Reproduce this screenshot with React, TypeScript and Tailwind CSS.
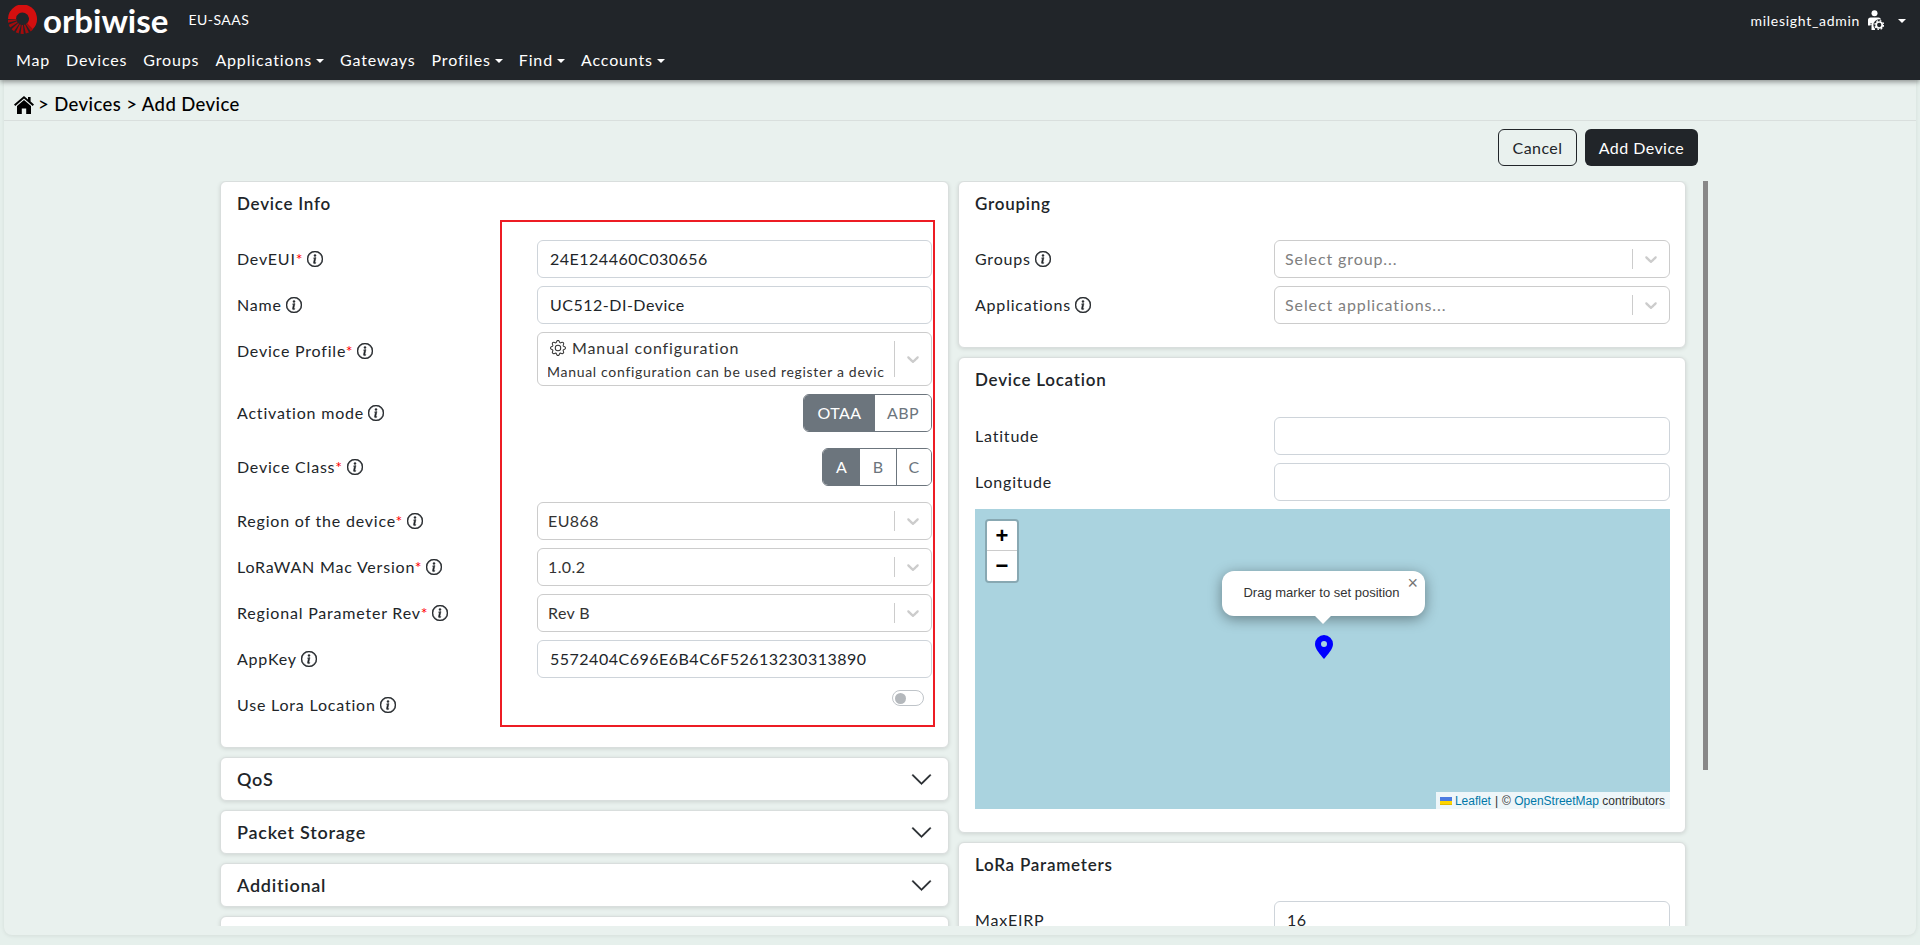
import { BsChevronDown, BsGear, BsInfoCircle } from "react-icons/bs";

const font = "font-['Lato','Noto_Sans',sans-serif]";

const Info = () => <BsInfoCircle className="inline-block ml-[4px] w-[16px] h-[16px] text-[#212529] align-[-2px] [stroke-width:0.5]" />;

const Req = () => <span className="text-[#ff0000]">*</span>;

const Label = ({ text, req, noInfo }: { text: string; req?: boolean; noInfo?: boolean }) => (
  <div className="text-[16px] tracking-[0.8px] text-[#212529] whitespace-nowrap">
    {text}
    {req && <Req />}
    {!noInfo && <Info />}
  </div>
);

const TextBox = ({ value }: { value?: string }) => (
  <div className="h-[38px] rounded-md border border-[#ced4da] bg-white pl-[12px] flex items-center text-[16px] tracking-[0.5px] text-[#212529]">
    {value}
  </div>
);

const SelectChevron = () => (
  <div className="flex items-center self-stretch py-[8px]">
    <div className="w-px self-stretch bg-[#cccccc]" />
    <div className="w-[36px] flex justify-center">
      <svg viewBox="0 0 20 20" className="w-[20px] h-[20px] fill-[#cccccc]">
        <path d="M4.516 7.548c0.436-0.446 1.043-0.481 1.576 0l3.908 3.747 3.908-3.747c0.533-0.481 1.141-0.446 1.574 0 0.436 0.445 0.408 1.197 0 1.615-0.406 0.418-4.695 4.502-4.695 4.502-0.217 0.223-0.502 0.335-0.787 0.335s-0.57-0.112-0.789-0.335c0 0-4.287-4.084-4.695-4.502s-0.436-1.17 0-1.615z" />
      </svg>
    </div>
  </div>
);

const SelectBox = ({ value, placeholder }: { value?: string; placeholder?: string }) => (
  <div className="h-[38px] rounded-md border border-[#cccccc] bg-white pl-[10px] flex items-center justify-between text-[16px]">
    {placeholder ? <span className="text-[#808080] tracking-[0.9px]">{placeholder}</span> : <span className="text-[#333333] tracking-[0.4px]">{value}</span>}
    <SelectChevron />
  </div>
);

const Segments = ({ items, widths }: { items: string[]; widths: string[] }) => (
  <div className="flex justify-end">
    <div className="h-[38px] flex rounded-md border border-[#6c757d] overflow-hidden text-[16px] tracking-[0.4px]">
      {items.map((it, i) => (
        <div key={it} className={`${widths[i]} flex items-center justify-center ${i === 0 ? "bg-[#6c757d] text-white" : "bg-white text-[#6c757d]"} ${i > 1 ? "border-l border-[#6c757d]" : ""}`}>
          {it}
        </div>
      ))}
    </div>
  </div>
);

const Row = ({ label, children, className, wide }: { label: React.ReactNode; children: React.ReactNode; className?: string; wide?: boolean }) => (
  <div className={`flex items-start ${className ?? ""}`}>
    <div className={`${wide ? "w-[299px]" : "w-[300px]"} shrink-0 pt-[8px] leading-[22px]`}>{label}</div>
    <div className={wide ? "w-[396px] shrink-0" : "w-[395px] shrink-0"}>{children}</div>
  </div>
);

const Card = ({ title, children, className }: { title: string; children?: React.ReactNode; className?: string }) => (
  <div className={`bg-white rounded-md border border-[#d9dedd] shadow-[0_1px_4px_rgba(0,0,0,0.12)] px-[16px] ${className ?? ""}`}>
    <div className="pt-[10px] text-[17px] font-semibold tracking-[0.75px] text-[#212529] leading-[24px]">{title}</div>
    {children}
  </div>
);

const Collapsed = ({ title, className }: { title: string; className?: string }) => (
  <div className={`bg-white rounded-md border border-[#d9dedd] shadow-[0_1px_4px_rgba(0,0,0,0.12)] pl-[16px] pr-[15px] flex items-center justify-between shrink-0 ${className ?? "h-[44px]"}`}>
    <span className="text-[18px] font-semibold tracking-[0.75px] text-[#212529]">{title}</span>
    <BsChevronDown className="w-[23px] h-[23px] text-[#212529] [stroke-width:0.3]" />
  </div>
);

const Logo = () => (
  <svg viewBox="0 0 30 30" className="w-[30px] h-[30px] shrink-0">
    <path d="M4 14 A10.5 10.5 0 1 1 21.9 21.4" fill="none" stroke="#d40f0f" strokeWidth="8" />
    <path d="M21.9 21.4 A10.5 10.5 0 0 1 4 14" fill="none" stroke="#a30c0c" strokeWidth="9" strokeDasharray="2.2 1.4" />
  </svg>
);

const UserGear = () => (
  <svg viewBox="0 0 17 20" className="w-[17px] h-[20px]">
    <circle cx="7.5" cy="3.2" r="3" fill="#ffffff" />
    <path d="M1 10a2.6 2.6 0 0 1 2.6-2.6h7.8A2.6 2.6 0 0 1 14 10v5H1z" fill="#ffffff" />
    <path d="M3.6 13h.9v7H3.600zM8 13h1v7H8z" fill="#212529" />
    <path d="M1 14h2.500v1.500H1zM4.500 14H8v6H4.500z" fill="#ffffff" />
    <circle cx="12.200" cy="15" r="5.800" fill="#212529" />
    <circle cx="12.200" cy="15" r="3" fill="none" stroke="#ffffff" strokeWidth="1.700" />
    <circle cx="12.200" cy="15" r="4.300" fill="none" stroke="#ffffff" strokeWidth="1.300" strokeDasharray="1.700 1.680" />
  </svg>
);

const Home = () => (
  <svg viewBox="0 0 20 18" className="w-[20px] h-[18px] fill-black mr-[4px] shrink-0">
    <path d="M10 0l4 3.400V1h2.600v4.600L20 8.500l-1.300 1.500L10 2.600 1.300 10 0 8.500z" />
    <path d="M10 4l7 6v8h-4.800v-5.500H7.800V18H3v-8z" />
  </svg>
);

const Caret = () => <span className="ml-[4px] inline-block align-[3px] border-t-[4px] border-x-[4px] border-x-transparent border-t-white" />;

const LeafletMap = () => (
  <div className="relative h-[300px] w-[695px] bg-[#aad3df] mt-[8px] overflow-hidden font-['Liberation_Sans',sans-serif]">
    <div className="absolute left-[10px] top-[10px] w-[34px] rounded-[4px] border-2 border-[rgba(0,0,0,0.2)] bg-clip-padding">
      <div className="h-[30px] bg-white rounded-t-[2px] border-b border-[#cccccc] flex items-center justify-center text-[22px] font-bold leading-none text-black">+</div>
      <div className="h-[30px] bg-white rounded-b-[2px] flex items-center justify-center text-[22px] font-bold leading-none text-black">−</div>
    </div>
    <div className="absolute left-[247px] top-[62px] w-[203px] h-[45px] bg-white rounded-[12px] shadow-[0_3px_14px_rgba(0,0,0,0.4)] flex items-center justify-center text-[13px] text-[#333333] pr-[4px]">
      <span className="-mt-[2px]">Drag marker to set position</span>
      <span className="absolute right-[7px] top-[3px] text-[18px] leading-[18px] text-[#757575] font-normal">×</span>
      <div className="absolute left-[91px] -bottom-[9px] w-[20px] h-[10px] overflow-hidden">
        <div className="w-[14px] h-[14px] bg-white rotate-45 mx-auto -mt-[8px]" />
      </div>
    </div>
    <svg viewBox="0 0 18 24" className="absolute left-[340px] top-[126px] w-[18px] h-[24px]">
      <path fillRule="evenodd" fill="#0000ff" d="M9 0a9 9 0 0 1 9 9c0 5-5 10-9 15C5 19 0 14 0 9a9 9 0 0 1 9-9zm0 6a3 3 0 1 0 0 6 3 3 0 0 0 0-6z" />
    </svg>
    <div className="absolute right-0 bottom-0 h-[17px] bg-[rgba(255,255,255,0.8)] pl-[4px] pr-[5px] flex items-center text-[12px] text-[#333333] whitespace-nowrap">
      <svg viewBox="0 0 12 8" className="w-[12px] h-[8px] mr-[3px]">
        <path fill="#4c7be1" d="M0 0h12v4H0z" />
        <path fill="#ffd500" d="M0 4h12v3H0z" />
        <path fill="#e0bc00" d="M0 7h12v1H0z" />
      </svg>
      <span className="text-[#0078a8]">Leaflet</span>
      <span className="mx-[4px]">|</span>
      <span>©&nbsp;</span>
      <span className="text-[#0078a8]">OpenStreetMap</span>
      <span>&nbsp;contributors</span>
    </div>
  </div>
);

export default function App() {
  return (
    <div className={`h-[945px] w-[1920px] overflow-hidden bg-[#e6f0ec] ${font} relative`}>
      <nav className="h-[80px] bg-[#212529] shadow-[0_2px_5px_rgba(0,0,0,0.4)] relative z-10 text-white">
        <div className="h-[40px] flex items-center pl-[8px] pr-[14px]">
          <Logo />
          <span className="ml-[5px] text-[33px] font-bold leading-none">orbiwise</span>
          <span className="ml-[20px] -mt-[2px] text-[14px] tracking-[0.5px]">EU-SAAS</span>
          <div className="ml-auto flex items-center text-[14px] tracking-[0.7px]">
            milesight_admin
            <span className="ml-[7px]"><UserGear /></span>
            <span className="ml-[10px]"><Caret /></span>
          </div>
        </div>
        <div className="h-[40px] flex items-center pl-[16px] gap-[16px] text-[16px] tracking-[0.85px] text-white">
          <span>Map</span>
          <span>Devices</span>
          <span>Groups</span>
          <span>Applications<Caret /></span>
          <span>Gateways</span>
          <span>Profiles<Caret /></span>
          <span>Find<Caret /></span>
          <span>Accounts<Caret /></span>
        </div>
      </nav>

      <main className="mx-[4px] h-[855px] rounded-b-lg bg-[#e9f1ee] shadow-[0_1px_4px_rgba(0,0,0,0.08)] overflow-hidden">
        <div className="border-b border-[#d9dfdd] h-[41px] flex items-center pl-[10px] pt-[9px] text-[18.5px] font-medium tracking-[0.4px] text-black">
          <Home />
          <span>&gt; Devices &gt; Add Device</span>
        </div>

        <div className="w-[1694px] h-[37px] mt-[8px] flex justify-end gap-[8px]">
          <div className="w-[79px] rounded-md border border-[#212529] flex items-center justify-center text-[16px] tracking-[0.45px] text-[#212529]">Cancel</div>
          <div className="w-[113px] rounded-md bg-[#212529] flex items-center justify-center text-[16px] tracking-[0.45px] text-white">Add Device</div>
        </div>

        <div className="mt-[15px] pl-[216px] flex h-[745px] overflow-hidden">
          <div className="w-[729px] shrink-0 flex flex-col gap-[9px]">
            <Card title="Device Info" className="h-[567px] relative shrink-0">
              <div className="absolute left-[279px] top-[38px] w-[435px] h-[507px] border-2 border-[#ed1c24] pointer-events-none" />
              <div className="mt-[24px] flex flex-col gap-[8px]">
                <Row label={<Label text="DevEUI" req />}><TextBox value="24E124460C030656" /></Row>
                <Row label={<Label text="Name" />}><TextBox value="UC512-DI-Device" /></Row>
                <Row label={<Label text="Device Profile" req />}>
                  <div className="h-[54px] rounded-md border border-[#cccccc] flex items-stretch justify-between pl-[10px]">
                    <div className="pt-[4px] overflow-hidden w-[336px]">
                      <div className="flex items-center text-[16px] tracking-[0.9px] text-[#333333] leading-[22px]">
                        <BsGear className="w-[16px] h-[16px] mr-[6px] ml-[2px]" />
                        Manual configuration
                      </div>
                      <div className="-ml-[1px] text-[14px] tracking-[0.7px] text-[#333333] whitespace-nowrap leading-[20px] mt-[3px]">Manual configuration can be used register a devic</div>
                    </div>
                    <SelectChevron />
                  </div>
                </Row>
                <Row label={<Label text="Activation mode" />} className="h-[38px]">
                  <Segments items={["OTAA", "ABP"]} widths={["w-[71px]", "w-[56px]"]} />
                </Row>
                <Row label={<Label text="Device Class" req />} className="h-[38px] mt-[8px]">
                  <Segments items={["A", "B", "C"]} widths={["w-[37px]", "w-[36px]", "w-[35px]"]} />
                </Row>
                <Row label={<Label text="Region of the device" req />} className="mt-[8px]"><SelectBox value="EU868" /></Row>
                <Row label={<Label text="LoRaWAN Mac Version" req />}><SelectBox value="1.0.2" /></Row>
                <Row label={<Label text="Regional Parameter Rev" req />}><SelectBox value="Rev B" /></Row>
                <Row label={<Label text="AppKey" />}><TextBox value="5572404C696E6B4C6F52613230313890" /></Row>
                <Row label={<Label text="Use Lora Location" />}>
                  <div className="flex justify-end pr-[8px] pt-[4px]">
                    <div className="w-[32px] h-[16px] rounded-full border border-[#bfc4c9] bg-white flex items-center pl-[2px]">
                      <div className="w-[11px] h-[11px] rounded-full bg-[#b4b8bc]" />
                    </div>
                  </div>
                </Row>
              </div>
            </Card>
            <Collapsed title="QoS" />
            <Collapsed title="Packet Storage" />
            <Collapsed title="Additional" />
            <Collapsed title="" />
          </div>

          <div className="w-[728px] ml-[9px] shrink-0 flex flex-col gap-[9px]">
            <Card title="Grouping" className="h-[167px] shrink-0">
              <div className="mt-[24px] flex flex-col gap-[8px]">
                <Row wide label={<Label text="Groups" />}><SelectBox placeholder="Select group..." /></Row>
                <Row wide label={<Label text="Applications" />}><SelectBox placeholder="Select applications..." /></Row>
              </div>
            </Card>
            <Card title="Device Location" className="h-[476px] shrink-0">
              <div className="mt-[25px] flex flex-col gap-[8px]">
                <Row wide label={<Label text="Latitude" noInfo />}><TextBox /></Row>
                <Row wide label={<Label text="Longitude" noInfo />}><TextBox /></Row>
              </div>
              <LeafletMap />
            </Card>
            <Card title="LoRa Parameters" className="h-[200px] shrink-0">
              <div className="mt-[24px]">
                <Row wide label={<Label text="MaxEIRP" noInfo />}><TextBox value="16" /></Row>
              </div>
            </Card>
          </div>

          <div className="ml-[17px] w-[5px] h-[589px] bg-[#888888] shrink-0" />
        </div>
      </main>
    </div>
  );
}
